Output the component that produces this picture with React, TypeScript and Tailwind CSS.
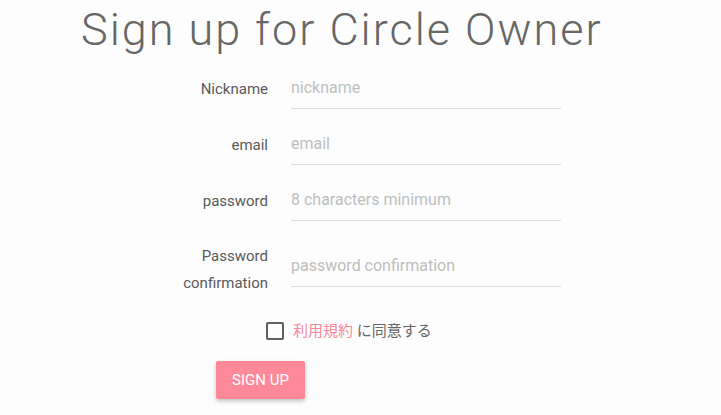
const fields = [
  { label: ["Nickname"], placeholder: "nickname", type: "text" },
  { label: ["email"], placeholder: "email", type: "email" },
  { label: ["password"], placeholder: "8 characters minimum", type: "password" },
  { label: ["Password", "confirmation"], placeholder: "password confirmation", type: "password" },
];

export default function App() {
  return (
    <div
      className="min-h-[415px] w-full bg-[#fdfdfd] text-[#555]"
      style={{ fontFamily: "Roboto, 'Noto Sans CJK JP', sans-serif" }}
    >
      <h1 className="pl-[81px] pt-[2px] text-[45px] font-light leading-[56px] tracking-[2px] text-[#666]">
        Sign up for Circle Owner
      </h1>

      <form className="mt-[14px]" onSubmit={(e) => e.preventDefault()}>
        <div className="flex flex-col gap-[19px]">
          {fields.map((f, i) => (
            <div key={i} className="flex items-center gap-[23px]">
              <label
                className={`w-[268px] text-right text-[15px] leading-[27px] text-[#5a5a5a] ${
                  f.label.length > 1 ? "pt-[3px]" : "pb-[2px]"
                }`}
              >
                {f.label.map((l) => (
                  <div key={l}>{l}</div>
                ))}
              </label>
              <div className="w-[270px] border-b border-[#dcdcdc] pt-[4px] pb-[8px]">
                <input
                  type={f.type}
                  placeholder={f.placeholder}
                  className="block w-full bg-transparent text-[16px] leading-[24px] text-[#444] outline-none placeholder:text-[#bdbdbd]"
                />
              </div>
            </div>
          ))}
        </div>

        <label className="mt-[24px] ml-[266px] flex items-center gap-[9px]">
          <span className="h-[18px] w-[18px] rounded-[2px] border-2 border-[#5f5f5f]" />
          <span className="text-[15px] leading-[20px] text-[#666]">
            <span className="text-[#f7899a]">利用規約</span> に同意する
          </span>
        </label>

        <button
          type="submit"
          className="mt-[20px] ml-[216px] h-[38px] w-[89px] rounded-[2px] bg-[#fd8898] text-[15px] uppercase text-white shadow-[0_2px_4px_rgba(0,0,0,0.25)]"
        >
          Sign up
        </button>
      </form>
    </div>
  );
}
